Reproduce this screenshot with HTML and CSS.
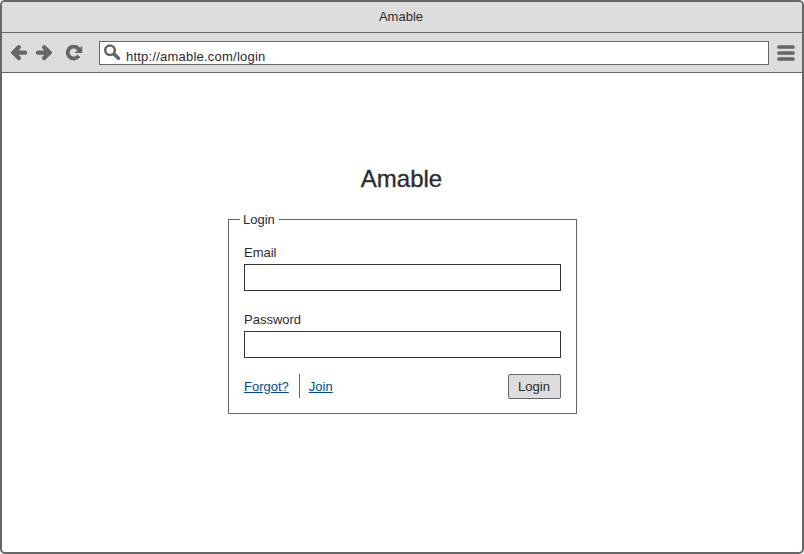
FILE: index.html
```html
<!DOCTYPE html>
<html lang="en">
<head>
<meta charset="utf-8">
<title>Amable</title>
<link rel="stylesheet" href="styles.css">
</head>
<body>
<div class="window">
  <header class="titlebar">Amable</header>
  <nav class="toolbar">
    <svg class="icon-back" width="16" height="16" viewBox="0 0 16 16"><path d="M7.8 2.3 2.4 7.7 7.8 13.1M4 7.7H14" /><path class="head" d="M2.4 7.7 8 2V13.4Z" /></svg>
    <svg class="icon-forward" width="16" height="16" viewBox="0 0 16 16"><path d="M8.2 2.3 13.6 7.7 8.2 13.1M12 7.7H2" /><path class="head" d="M13.6 7.7 8 2V13.4Z" /></svg>
    <svg class="icon-reload" width="17" height="16" viewBox="0 0 17 16"><path class="arc" d="M13 4.6A6 6 0 1 0 12.8 10.8" /><path class="tip" d="M16.2.8V8H8.6Z" /></svg>
    <div class="address">
      <svg class="icon-search" width="17" height="17" viewBox="0 0 17 17"><circle cx="6" cy="6.2" r="4.8" /><path d="m10.2 10.2 4.2 4" /></svg>
      <span class="url">http://amable.com/login</span>
    </div>
    <svg class="icon-menu" width="18" height="16" viewBox="0 0 18 16"><path d="M2 2H16M2 8H16M2 14H16" /></svg>
  </nav>
  <main class="page">
    <h1 class="brand">Amable</h1>
    <form class="login">
      <fieldset class="group">
        <legend class="legend">Login</legend>
        <label class="label" for="email">Email</label>
        <input class="field" id="email" type="email">
        <label class="label" for="password">Password</label>
        <input class="field" id="password" type="password">
        <div class="actions">
          <a class="link forgot" href="#">Forgot?</a>
          <a class="link" href="#">Join</a>
          <button class="submit" type="button">Login</button>
        </div>
      </fieldset>
    </form>
  </main>
</div>
</body>
</html>
```
FILE: styles.css
```css
* { box-sizing: border-box; }
body {
  margin: 0;
  background: #fff;
  color: #2b2b2b;
  font: 13px/15px "Liberation Sans", Arial, sans-serif;
}
.window {
  height: 554px;
  border: 2px solid #666;
  border-radius: 5px;
  overflow: hidden;
  background: #fff;
}
.titlebar {
  height: 31px;
  padding-top: 7px;
  border-bottom: 1px solid #666;
  background: #ddd;
  text-align: center;
  padding-right: 2px;
}
.toolbar {
  display: flex;
  align-items: center;
  height: 40px;
  padding: 0 7px 0 9px;
  border-bottom: 1px solid #666;
  background: #ddd;
}
svg { display: block; flex: none; fill: none; stroke: #666; stroke-width: 4.3; stroke-linecap: round; }
.head { fill: #666; stroke: none; }
.icon-forward { margin-left: 9px; }
.icon-reload { margin-left: 14px; }
.icon-reload .arc { stroke-width: 3.8; stroke-linecap: butt; }
.icon-reload .tip { fill: #666; stroke: none; }
.icon-menu { stroke-width: 3.7; }
.address {
  display: flex;
  flex: 1;
  height: 24px;
  margin: 0 8px 0 16px;
  border: 1px solid #666;
  background: #fff;
}
.icon-search { margin: 2px 0 0 4px; stroke-width: 2.5; }
.icon-search path { stroke-width: 3.6; }
.url { margin: 7px 0 0 5px; letter-spacing: .22px; }
.page { padding-top: 92px; }
.brand {
  margin: 0;
  padding-right: 1px;
  font-size: 24px;
  line-height: 27px;
  font-weight: 400;
  text-align: center;
  -webkit-text-stroke: .35px #333;
}
.login { width: 349px; margin: 20px auto 0 226px; }
.group {
  min-width: 0;
  height: 202px;
  margin: 0;
  padding: 18px 15px 0;
  border: 1px solid #666;
}
.legend { margin-left: -4px; padding: 0 4px 0 3px; }
.label { display: block; }
.field {
  display: block;
  width: 100%;
  height: 27px;
  margin: 4px 0 21px;
  padding: 0 6px;
  border: 1px solid #333;
  border-radius: 0;
  background: #fff;
  font: inherit;
  outline: 0;
}
.actions { display: flex; align-items: center; height: 25px; margin-top: -5px; }
.link { color: #004b8d; text-decoration: underline; text-underline-offset: 1px; }
.forgot {
  height: 24px;
  align-self: flex-start;
  margin-right: 9px;
  padding-right: 10px;
  border-right: 1px solid #666;
  line-height: 25px;
}
.submit {
  width: 53px;
  height: 25px;
  margin-left: auto;
  padding: 0 1px 0 0;
  border: 1px solid #666;
  border-radius: 2px;
  background: #ddd;
  color: #2b2b2b;
  font: inherit;
}
```
